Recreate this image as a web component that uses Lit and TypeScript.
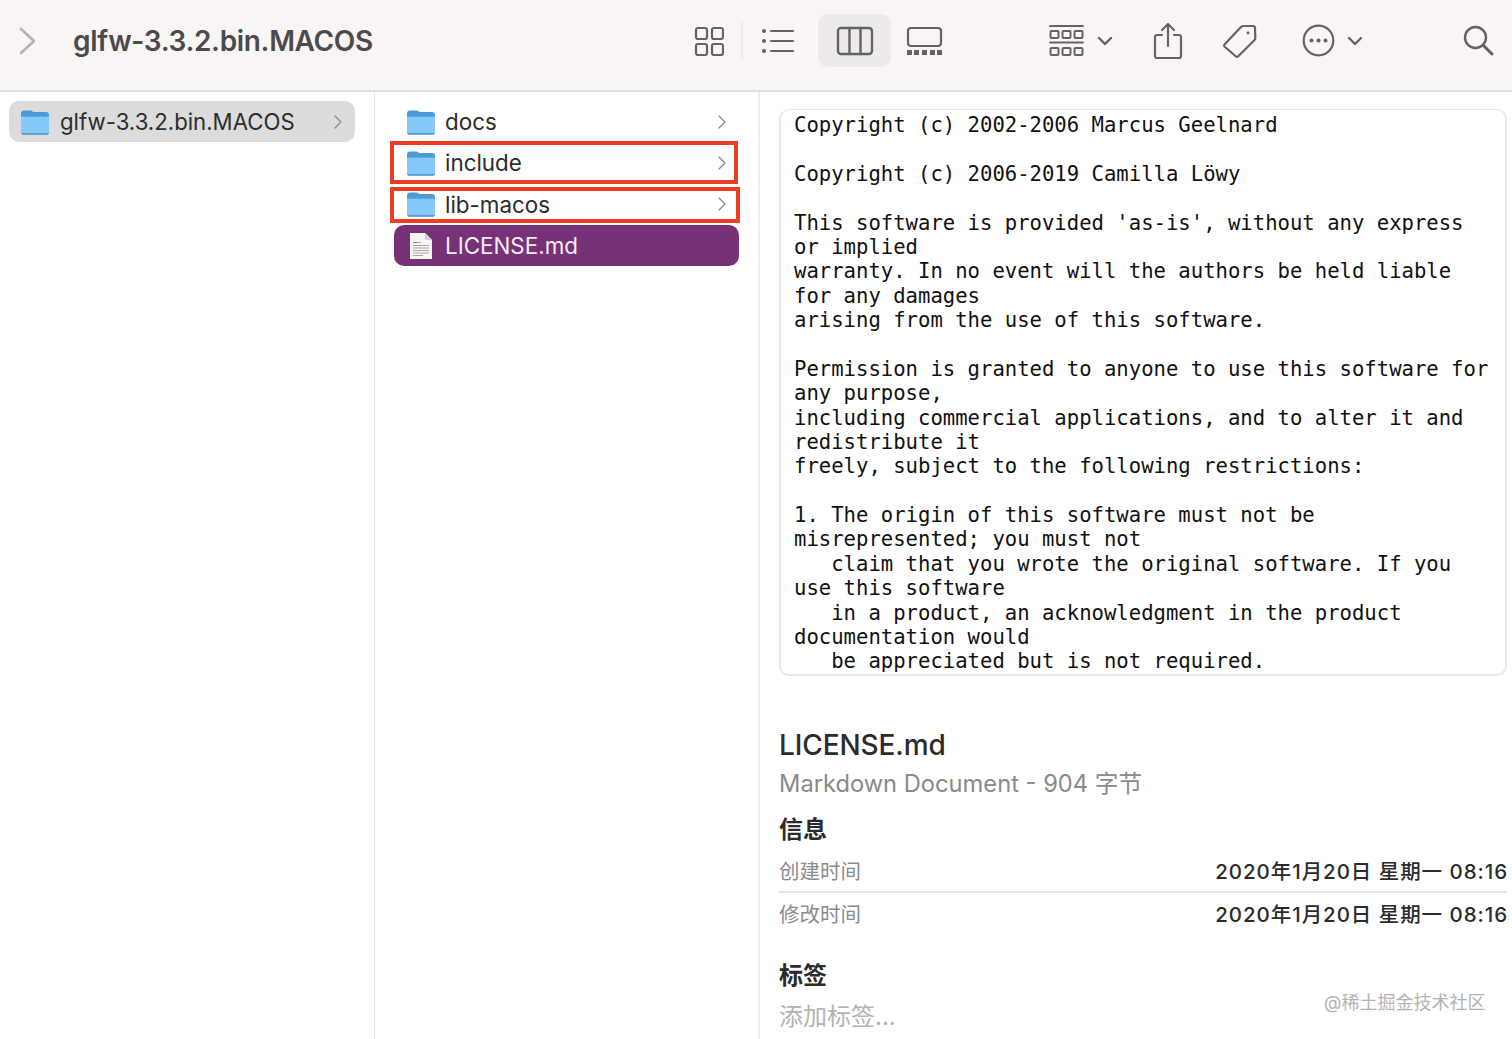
import { LitElement, html, css, svg } from "lit";
import { customElement } from "lit/decorators.js";

const folder = html`<svg class="fi" viewBox="0 0 30 28" width="30" height="28">
  <path d="M1 6C1 3.500 2 2.500 4 2.500h6.500c1.500 0 2 1.600 3.500 1.600H26c2 0 3 1 3 3V10H1z" fill="#4a9bd8"/>
  <path d="M1 8h28v16c0 1.800-1 2.800-2.800 2.800H3.800C2 26.800 1 25.800 1 24z" fill="#84c9f7"/>
  <path d="M1 8h28v1H1z" fill="#5aaae6"/>
  <path d="M1 25c.4 1.200 1.300 1.800 2.800 1.800h22.400c1.500 0 2.400-.6 2.800-1.800z" fill="#5d9ccb"/>
</svg>`;

const chev = html`<svg class="ch" viewBox="0 0 10 16" width="10" height="16"><path d="M2 2l6 6-6 6" fill="none" stroke="#8a8a8a" stroke-width="1.300" stroke-linecap="round" stroke-linejoin="round"/></svg>`;

const doc = html`<svg class="fi" viewBox="0 0 30 28" width="30" height="28">
  <path d="M4 1h15l7 7v19H4z" fill="#f7f5f3"/>
  <path d="M19 1l7 7h-7z" fill="#d5d3d2"/>
  <path d="M7 10h8v1H7zM7 13h16v1H7zM7 15.500h16v1H7zM7 18h16v1H7zM7 20.500h16v1H7zM7 23h10v1H7z" fill="#a9a5a8"/>
  <path d="M7 10h4v1H7z" fill="#c96a72"/>
</svg>`;

const tb = (w: number, h: number, body: unknown) => html`<svg viewBox="0 0 ${w} ${h}" width="${w}" height="${h}" fill="none" stroke="#666162" stroke-width="2.200" stroke-linecap="round" stroke-linejoin="round">${body}</svg>`;

const LICENSE = `Copyright (c) 2002-2006 Marcus Geelnard

Copyright (c) 2006-2019 Camilla Löwy

This software is provided 'as-is', without any express
or implied
warranty. In no event will the authors be held liable
for any damages
arising from the use of this software.

Permission is granted to anyone to use this software for
any purpose,
including commercial applications, and to alter it and
redistribute it
freely, subject to the following restrictions:

1. The origin of this software must not be
misrepresented; you must not
   claim that you wrote the original software. If you
use this software
   in a product, an acknowledgment in the product
documentation would
   be appreciated but is not required.`;

@customElement("app-root")
export class AppRoot extends LitElement {
  static styles = css`
    :host { display: block; width: 1512px; height: 1039px; overflow: hidden; background: #fff; position: relative;
      font-family: Inter, "Noto Sans CJK SC", sans-serif; color: #2a2a2a; }
    .toolbar { height: 90px; box-sizing: border-box; padding-bottom: 9px; background: #f9f5f5; display: flex; align-items: center; position: relative; }
    .back { margin-left: 19px; width: 17px; height: 28px; display: flex; flex: none; }
    .title { margin-left: 37px; width: 621px; flex: none; font-size: 28px; font-weight: 600; color: #4d4a4b; letter-spacing: -0.350px; }
    .tools { display: flex; align-items: center; }
    .tools svg { display: block; flex: none; }
    .vsep { width: 2px; height: 38px; background: #efebeb; margin: 0 18px 0 17px; }
    .active { width: 73px; height: 53px; background: #edeaea; border-radius: 10px; display: flex; align-items: center; justify-content: center; margin: 0 15px 0 23px; }
    .gap { flex: none; }
    .g106 { width: 106px; } .g12 { width: 12px; } .g40 { width: 40px; } .g39 { width: 39px; } .g44 { width: 44px; } .g100 { width: 100px; }
    .hr { height: 2px; background: #e0dede; }
    .body { display: flex; height: 947px; }
    .side { width: 374px; box-sizing: border-box; padding: 9px 19px 0 9px; flex: none; }
    .col { width: 386px; box-sizing: border-box; padding: 9px 19px 0 19px; border-left: 1px solid #e6e6e6; border-right: 2px solid #ececec; flex: none; position: relative; }
    .row { height: 41.300px; display: flex; align-items: center; box-sizing: border-box; padding: 0 12px; font-size: 22.400px; border-radius: 10px; color: #2c2c2c; }
    .row .fi { flex: none; margin-right: 9px; }
    .row .ch { margin-left: auto; }
    .sel-gray { background: #dcdcdc; padding: 0 12px 0 11px; height: 41px; font-size: 22.200px; }
    .sel-gray .fi { margin-right: 10px; }
    .sel { background: #773177; color: #f6ecf6; }
    .mark { position: absolute; left: 15px; width: 348px; box-sizing: border-box; border: 4px solid #ea3f23; pointer-events: none; }
    .m1 { top: 49px; height: 43px; }
    .m2 { top: 95px; height: 36px; width: 350px; }
    .prev { flex: 1; padding: 17px 5px 0 19px; min-width: 0; position: relative; }
    .text { height: 567px; box-sizing: border-box; border: 2px solid #e8e8e8; border-top-width: 1px; border-radius: 10px; padding: 3px 0 0 13px; overflow: hidden;
      font-family: "DejaVu Sans Mono", monospace; font-size: 20.600px; line-height: 24.380px; white-space: pre; color: #111; }
    .name { font-size: 28px; font-weight: 500; margin-top: 52px; line-height: 34px; color: #2b2b2b; letter-spacing: -0.100px; }
    .kind { font-size: 23.700px; color: #8a8a8a; line-height: 30px; margin-top: 7px; }
    .h { font-size: 24px; font-weight: 600; line-height: 30px; color: #2b2b2b; }
    .h1 { margin-top: 16px; }
    .h2 { margin-top: 28px; }
    .kv { display: flex; justify-content: space-between; align-items: center; height: 40px; font-size: 20.500px; }
    .kv.a { margin-top: 3px; border-bottom: 2px solid #e6e6e6; height: 43px; }
    .kv .k { color: #8c8c8c; }
    .kv .v { color: #2b2b2b; font-weight: 500; letter-spacing: 0.950px; margin-right: -1px; }
    .add { font-size: 24px; color: #b4b4b4; margin-top: 11px; line-height: 30px; }
    .wm { position: absolute; left: 564px; top: 899px; font-size: 18px; color: #b3b3b3; line-height: 24px; }
  `;

  render() {
    const row = (label: string) => html`<div class="row">${folder}<span>${label}</span>${chev}</div>`;
    return html`
      <div class="toolbar">
        <svg class="back" viewBox="0 0 17 28"><path d="M2 2l13 12L2 26" fill="none" stroke="#b4b1b1" stroke-width="2.600" stroke-linecap="round" stroke-linejoin="round"/></svg>
        <div class="title">glfw-3.3.2.bin.MACOS</div>
        <div class="tools">
          ${tb(30, 30, svg`<rect x="2" y="2" width="11" height="11" rx="2"/><rect x="18" y="2" width="11" height="11" rx="2"/><rect x="2" y="18" width="11" height="11" rx="2"/><rect x="18" y="18" width="11" height="11" rx="2"/>`)}
          <div class="vsep"></div>
          ${tb(34, 28, svg`<path d="M10 4h22M10 14h22M10 24h22"/><g fill="#666162" stroke="none"><circle cx="3" cy="4" r="2"/><circle cx="3" cy="14" r="2"/><circle cx="3" cy="24" r="2"/></g>`)}
          <div class="active">
            ${tb(38, 30, svg`<rect x="2" y="2" width="34" height="26" rx="3" stroke-width="2.400"/><path d="M13.500 2v26M24.500 2v26" stroke-width="2.400"/>`)}
          </div>
          ${tb(37, 30, svg`<rect x="2" y="2" width="33" height="18" rx="3"/><g fill="#666162" stroke="none"><rect x="1" y="24" width="5" height="5"/><rect x="8" y="24" width="5" height="5"/><rect x="16" y="24" width="5" height="5"/><rect x="24" y="24" width="5" height="5"/><rect x="31" y="24" width="5" height="5"/></g>`)}
          <div class="gap g106"></div>
          ${tb(36, 34, svg`<path d="M1 2h33M1 18.500h33" stroke-width="1.800"/><g stroke-width="2"><rect x="1.500" y="7" width="8" height="7" rx="1"/><rect x="13.500" y="7" width="8" height="7" rx="1"/><rect x="25.500" y="7" width="8" height="7" rx="1"/><rect x="1.500" y="24" width="8" height="7" rx="1"/><rect x="13.500" y="24" width="8" height="7" rx="1"/><rect x="25.500" y="24" width="8" height="7" rx="1"/></g>`)}
          <div class="gap g12"></div>
          ${tb(16, 10, svg`<path d="M2 2l6 6 6-6" stroke-width="2.400"/>`)}
          <div class="gap g40"></div>
          ${tb(30, 38, svg`<path d="M9 13H4a2 2 0 0 0-2 2v19a2 2 0 0 0 2 2h22a2 2 0 0 0 2-2V15a2 2 0 0 0-2-2h-5M15 24V2M9 8l6-6 6 6"/>`)}
          <div class="gap g39"></div>
          ${tb(36, 36, svg`<path d="M2.500 21.500L19 4a3 3 0 0 1 2-1h10a2 2 0 0 1 2 2l.3 10a3 3 0 0 1-1 2.300L16 33.500a1.500 1.500 0 0 1-2 0L2.500 23.500a1.500 1.500 0 0 1 0-2z"/><circle cx="26" cy="10" r="1.400" fill="#666162" stroke="none"/>`)}
          <div class="gap g44"></div>
          ${tb(33, 33, svg`<circle cx="16.500" cy="16.500" r="14.800"/><g fill="#666162" stroke="none"><circle cx="9.500" cy="16.500" r="2"/><circle cx="16.500" cy="16.500" r="2"/><circle cx="23.500" cy="16.500" r="2"/></g>`)}
          <div class="gap g12"></div>
          ${tb(16, 10, svg`<path d="M2 2l6 6 6-6" stroke-width="2.400"/>`)}
          <div class="gap g100"></div>
          ${tb(32, 32, svg`<circle cx="12.500" cy="12.500" r="10.500" stroke-width="2.400"/><path d="M20.500 20.500L29 29" stroke-width="3"/>`)}
        </div>
      </div>
      <div class="hr"></div>
      <div class="body">
        <div class="side">
          <div class="row sel-gray">${folder}<span>glfw-3.3.2.bin.MACOS</span>${chev}</div>
        </div>
        <div class="col">
          ${row("docs")}
          ${row("include")}
          ${row("lib-macos")}
          <div class="row sel">${doc}<span>LICENSE.md</span></div>
          <div class="mark m1"></div>
          <div class="mark m2"></div>
        </div>
        <div class="prev">
          <div class="text">${LICENSE}</div>
          <div class="name">LICENSE.md</div>
          <div class="kind">Markdown Document - 904 字节</div>
          <div class="h h1">信息</div>
          <div class="kv a"><span class="k">创建时间</span><span class="v">2020年1月20日 星期一 08:16</span></div>
          <div class="kv"><span class="k">修改时间</span><span class="v">2020年1月20日 星期一 08:16</span></div>
          <div class="h h2">标签</div>
          <div class="add">添加标签...</div>
          <div class="wm">@稀土掘金技术社区</div>
        </div>
      </div>
    `;
  }
}
